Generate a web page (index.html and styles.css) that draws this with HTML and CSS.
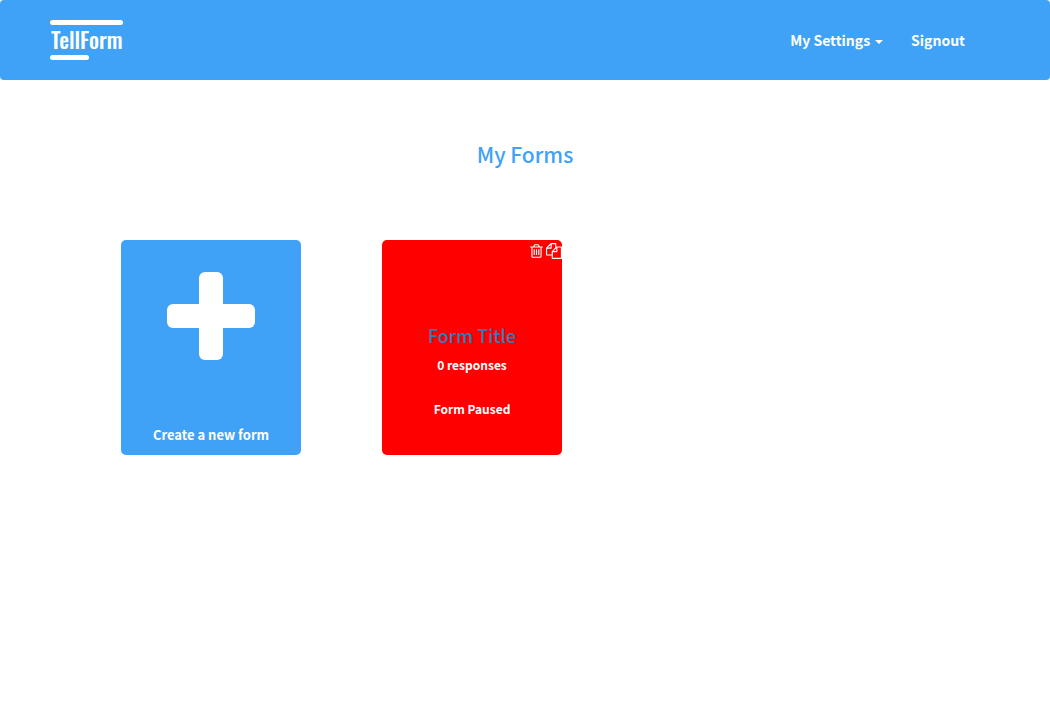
FILE: index.html
```html
<!DOCTYPE html>
<html lang="en">
<head>
<meta charset="utf-8">
<title>TellForm</title>
<link rel="stylesheet" href="styles.css">
</head>
<body>
<header class="navbar">
  <a class="brand" href="#" aria-label="TellForm home">
    <span class="brand-bar"></span>
    <span class="brand-name">TellForm</span>
    <span class="brand-bar brand-bar-short"></span>
  </a>
  <nav class="nav">
    <button class="nav-item" type="button">My Settings<span class="caret"></span></button>
    <a class="nav-item" href="#">Signout</a>
  </nav>
</header>
<main>
  <h1 class="page-title">My Forms</h1>
  <div class="forms">
    <button class="card card-new" type="button">
      <svg class="plus" viewBox="0 0 88 88" aria-hidden="true"><rect x="32" width="24" height="88" rx="6"/><rect y="32" width="88" height="24" rx="6"/></svg>
      <span class="new-label">Create a new form</span>
    </button>
    <article class="card card-form">
      <div class="tools">
        <button class="tool" type="button" aria-label="Delete form"><svg class="trash" viewBox="192 0 1408 1792"><path d="M704 736v576q0 14-9 23t-23 9h-64q-14 0-23-9t-9-23v-576q0-14 9-23t23-9h64q14 0 23 9t9 23zm256 0v576q0 14-9 23t-23 9h-64q-14 0-23-9t-9-23v-576q0-14 9-23t23-9h64q14 0 23 9t9 23zm256 0v576q0 14-9 23t-23 9h-64q-14 0-23-9t-9-23v-576q0-14 9-23t23-9h64q14 0 23 9t9 23zm128 724v-948h-896v948q0 22 7 40.500t14.500 27 10.500 8.500h832q3 0 10.500-8.500t14.500-27 7-40.500zm-672-1076h448l-48-117q-7-9-17-11h-317q-10 2-17 11zm928 32v64q0 14-9 23t-23 9h-96v948q0 83-47 143.500t-113 60.500h-832q-66 0-113-58.500t-47-141.500v-952h-96q-14 0-23-9t-9-23v-64q0-14 9-23t23-9h309l70-167q15-37 54-63t79-26h320q40 0 79 26t54 63l70 167h309q14 0 23 9t9 23z"/></svg></button>
        <button class="tool" type="button" aria-label="Duplicate form"><svg class="copy" viewBox="0 0 1792 1792"><path d="M1696 384q40 0 68 28t28 68v1216q0 40-28 68t-68 28h-960q-40 0-68-28t-28-68v-288h-544q-40 0-68-28t-28-68v-672q0-40 20-88t48-76l408-408q28-28 76-48t88-20h416q40 0 68 28t28 68v328q68-40 128-40h416zm-544 213l-299 299h299v-299zm-640-384l-299 299h299v-299zm196 647l316-316v-416h-384v416q0 40-28 68t-68 28h-416v640h512v-256q0-40 20-88t48-76zm956 804v-1152h-384v416q0 40-28 68t-68 28h-416v640h896z"/></svg></button>
      </div>
      <h2 class="form-title"><a href="#">Form Title</a></h2>
      <p class="form-meta">0 responses</p>
      <p class="form-meta form-status">Form Paused</p>
    </article>
  </div>
</main>
</body>
</html>
```
FILE: styles.css
```css
* { box-sizing: border-box; }
body {
  margin: 0;
  background: #fff;
  color: #fff;
  font-family: "Source Sans Pro", "Noto Sans CJK SC", sans-serif;
}
button {
  margin: 0;
  padding: 0;
  border: 0;
  background: none;
  color: inherit;
  font: inherit;
  cursor: pointer;
}
a { color: inherit; text-decoration: none; }
svg { display: block; fill: currentColor; }

.navbar {
  display: flex;
  justify-content: space-between;
  align-items: center;
  height: 80px;
  padding: 0 85px 0 50px;
  border-radius: 4px;
  background: #3fa2f7;
}
.brand { display: block; }
.brand-bar {
  display: block;
  width: 73px;
  height: 5px;
  border-radius: 3px;
  background: #fff;
}
.brand-bar-short { width: 39px; }
.brand-name {
  display: block;
  padding: 0 0 2px 1px;
  font: 500 22px/28px Oswald, "Liberation Sans Narrow", "Liberation Sans", sans-serif;
}
.nav { display: flex; gap: 28px; }
.nav-item {
  display: flex;
  align-items: center;
  gap: 5px;
  font-size: 14px;
  font-weight: 700;
  line-height: 20px;
}
.caret {
  margin-top: 3px;
  border: 4px solid transparent;
  border-top-color: #fff;
  border-bottom: 0;
}

.page-title {
  margin: 59px 0 71px;
  color: #3fa2f7;
  font-size: 21px;
  font-weight: 500;
  line-height: 30px;
  text-align: center;
}
.forms {
  display: grid;
  grid-template-columns: repeat(auto-fill, 180px);
  gap: 81px;
  padding: 0 80px 40px 121px;
}
.card {
  display: flex;
  flex-direction: column;
  align-items: center;
  min-height: 215px;
  border-radius: 5px;
  overflow: hidden;
}
.card-new {
  justify-content: space-between;
  padding: 32px 0 10px;
  background: #3fa2f7;
}
.plus { width: 88px; height: 88px; }
.new-label {
  font-size: 13px;
  font-weight: 700;
  line-height: 20px;
}
.card-form { background: #f00; }
.tools {
  display: flex;
  align-self: flex-end;
  gap: 3px;
  padding-top: 3px;
}
.trash { width: 13px; height: 16px; }
.copy { width: 16px; height: 16px; }
.form-title {
  margin: 61px 0 5px;
  color: #337ab7;
  font-size: 18px;
  font-weight: 500;
  line-height: 30px;
}
.form-meta {
  margin: 0;
  font-size: 12px;
  font-weight: 700;
  line-height: 20px;
}
.form-status { margin-top: 24px; }
```
